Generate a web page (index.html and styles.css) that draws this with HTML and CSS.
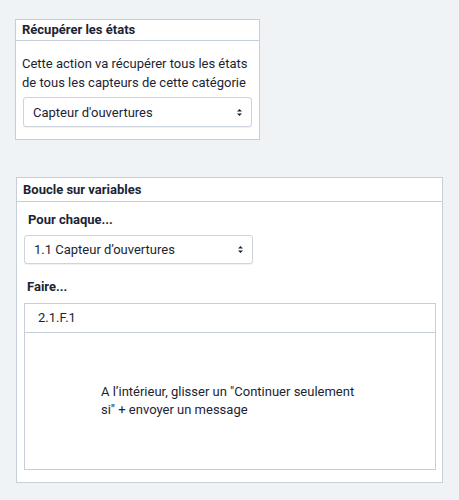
FILE: index.html
```html
<!DOCTYPE html>
<html lang="fr">
<head>
<meta charset="utf-8">
<link rel="stylesheet" href="styles.css">
</head>
<body>
<section class="card card-first">
  <header class="card-head">Récupérer les états</header>
  <div class="card-body">
    <p class="desc">Cette action va récupérer tous les états de tous les capteurs de cette catégorie</p>
    <div class="select">
      <span>Capteur d'ouvertures</span>
      <svg class="chev" width="7" height="9" viewBox="0 0 7 9"><path d="M1 3.5 L3.5 1 L6 3.5 Z M1 5.5 L3.5 8 L6 5.5 Z" fill="#1c2433"/></svg>
    </div>
  </div>
</section>

<section class="card card-second">
  <header class="card-head card-head-tall">Boucle sur variables</header>
  <div class="card-body body-loop">
    <div class="label">Pour chaque...</div>
    <div class="select">
      <span>1.1 Capteur d’ouvertures</span>
      <svg class="chev" width="7" height="9" viewBox="0 0 7 9"><path d="M1 3.5 L3.5 1 L6 3.5 Z M1 5.5 L3.5 8 L6 5.5 Z" fill="#1c2433"/></svg>
    </div>
    <div class="label label-faire">Faire...</div>
    <div class="inner">
      <div class="inner-head">2.1.F.1</div>
      <div class="inner-body">
        <p class="hint">A l’intérieur, glisser un "Continuer seulement si" + envoyer un message</p>
      </div>
    </div>
  </div>
</section>
</body>
</html>
```

FILE: styles.css
```css
html, body {
  margin: 0;
  padding: 0;
  background: #eff3f6;
}
body {
  font-family: Roboto, "Noto Sans", sans-serif;
  font-size: 13px;
  color: #1c2433;
  padding: 19px 0 0 0;
}
.card {
  background: #ffffff;
  border: 1px solid #c6cfd9;
  box-sizing: border-box;
}
.card-first {
  margin-left: 15px;
  width: 245px;
}
.card-second {
  margin-left: 16px;
  margin-top: 37px;
  width: 427px;
}
.card-head {
  font-weight: 700;
  height: 20px;
  line-height: 20px;
  padding: 0 6px;
  border-bottom: 1px solid #c6cfd9;
  font-size: 13px;
}
.card-head-tall {
  height: 23px;
  line-height: 23px;
}
.card-body {
  padding: 13px 7px 12px 7px;
}
.desc {
  margin: 0 0 5px -1px;
  line-height: 19px;
}
.select {
  height: 30px;
  box-sizing: border-box;
  width: 229px;
  border: 1px solid #ccd4dd;
  border-radius: 3px;
  box-shadow: 0 1px 1px rgba(0,0,0,0.06);
  display: flex;
  align-items: center;
  justify-content: space-between;
  padding: 0 8px 0 9px;
  background: #fff;
}
.chev {
  display: block;
}
.body-loop {
  padding: 8px 6px 12px 6px;
}
.body-loop .select {
  margin-left: 1px;
  height: 29px;
}
.label {
  font-weight: 700;
  line-height: 19px;
  padding-left: 5px;
  margin-bottom: 6px;
}
.label-faire {
  margin-top: 13px;
  padding-left: 4px;
  margin-bottom: 7px;
}
.inner {
  margin-left: 1px;
  border: 1px solid #c6cfd9;
}
.inner-head {
  height: 28px;
  line-height: 28px;
  padding-left: 13px;
  border-bottom: 1px solid #c6cfd9;
}
.inner-body {
  height: 136px;
  display: flex;
  align-items: center;
  justify-content: center;
}
.hint {
  margin: 0;
  width: 258px;
  line-height: 18px;
}
```
